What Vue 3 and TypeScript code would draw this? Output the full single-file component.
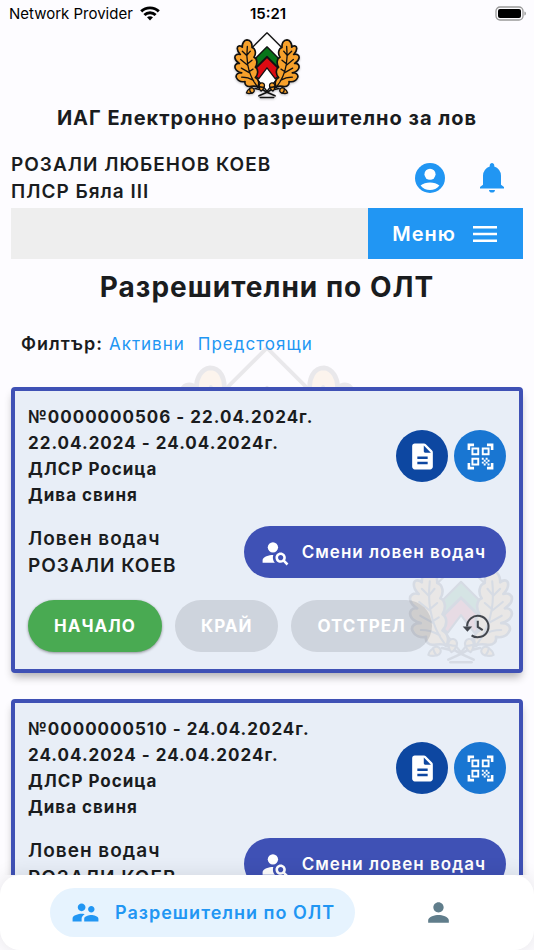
<script setup lang="ts">
import { ref } from 'vue'

interface Permit {
  number: string
  issued: string
  from: string
  to: string
  area: string
  game: string
  leader: string
}

const hunter = 'РОЗАЛИ ЛЮБЕНОВ КОЕВ'
const station = 'ПЛСР Бяла III'

const permits = ref<Permit[]>([
  {
    number: '0000000506',
    issued: '22.04.2024г.',
    from: '22.04.2024',
    to: '24.04.2024г.',
    area: 'ДЛСР Росица',
    game: 'Дива свиня',
    leader: 'РОЗАЛИ КОЕВ',
  },
  {
    number: '0000000510',
    issued: '24.04.2024г.',
    from: '24.04.2024',
    to: '24.04.2024г.',
    area: 'ДЛСР Росица',
    game: 'Дива свиня',
    leader: 'РОЗАЛИ КОЕВ',
  },
])
</script>

<template>
  <div class="app">
    <!-- Shared emblem artwork -->
    <svg class="defs" aria-hidden="true">
      <defs>
        <g id="acorn">
          <path d="M-7 -1 C-7 8 -4 11 0 14 C4 11 7 8 7 -1 Z" fill="#f7a12b" />
          <path d="M-8 0 C-9 -8 -4 -11 0 -11 C4 -11 9 -8 8 0 C4 2 -4 2 -8 0 Z" fill="#f7a12b" />
        </g>
        <g id="oak">
          <path
            fill="#f7a12b"
            stroke-width="5"
            d="M66 34 C57 35 51 45 52 56 C45 49 36 52 37 61 C37 68 41 73 46 78 C36 75 28 80 30 89 C31 97 37 101 43 105 C34 104 27 110 31 120 C34 128 42 131 50 133 C40 132 31 138 34 147 C39 158 50 161 60 159 C58 168 65 175 75 174 C84 173 92 171 98 176 C104 166 102 152 91 147 C100 138 101 123 91 116 C98 106 97 90 87 86 C94 76 92 60 81 57 C82 45 77 34 66 34 Z"
          />
          <path
            fill="none"
            d="M98 176 C82 156 72 132 68 108 C65 90 65 72 67 54 M66 82 L52 68 M66 80 L76 68 M68 110 L47 93 M68 106 L81 95 M74 133 L49 119 M73 129 L84 122 M86 156 C76 150 62 146 50 146"
          />
          <path fill="none" stroke-width="5" d="M97 174 L126 191 L150 202 M90 180 L104 183" />
          <use href="#acorn" transform="translate(77 187) rotate(65)" />
          <use href="#acorn" transform="translate(110 174) rotate(8)" />
        </g>
        <symbol id="emblem" viewBox="24 8 204 206">
          <g stroke="#111" stroke-width="4" stroke-linejoin="round" stroke-linecap="round">
            <path d="M126 13 L174 61 V130 L126 188 L78 130 V61 Z" fill="#fff" />
            <path d="M126 55 L172 101 V130 L126 84 L80 130 V101 Z" fill="#08751a" />
            <path d="M126 86 L172 132 L151 151 L126 118 L101 151 L80 132 Z" fill="#dc0a12" />
            <path d="M106 207 H146" fill="none" stroke-width="5" />
            <use href="#oak" />
            <use href="#oak" transform="matrix(-1 0 0 1 252 0)" />
          </g>
        </symbol>
      </defs>
    </svg>

    <div class="status">
      <span class="carrier">
        Network Provider
        <svg class="wifi" viewBox="0 0 20 15" aria-hidden="true">
          <g fill="none" stroke="#000" stroke-width="2.9">
            <path d="M1.2 5.4 C6 .7 14 .7 18.8 5.4" />
            <path d="M4.4 9 C7.5 6 12.5 6 15.6 9" />
          </g>
          <path d="M7 11.3 C8.7 9.8 11.3 9.8 13 11.3 L10 14.4 Z" />
        </svg>
      </span>
      <time class="clock">15:21</time>
      <svg class="battery" viewBox="0 0 32 16" aria-hidden="true">
        <rect x="1" y="1" width="27" height="13" rx="4" fill="none" stroke="#999" stroke-width="1.3" />
        <rect x="3" y="3" width="23" height="9" rx="2" />
        <path d="M29.5 5.5 C31.2 6 31.2 9 29.5 9.5 Z" fill="#888" />
      </svg>
    </div>

    <header class="header">
      <svg class="logo" role="img" aria-label="ИАГ"><use href="#emblem" /></svg>
      <p class="app-title">ИАГ Електронно разрешително за лов</p>
      <div class="profile">
        <div class="who">
          <p>{{ hunter }}</p>
          <p>{{ station }}</p>
        </div>
        <button class="plain" type="button" aria-label="Профил">
          <svg viewBox="0 0 24 24" class="icon-lg">
            <circle cx="12" cy="12" r="10" fill="currentColor" />
            <circle cx="12" cy="9.5" r="3.7" fill="#fff" />
            <path d="M5.7 17 C7.3 15.7 9.6 15 12 15 S16.7 15.7 18.3 17 C16.7 19 14.5 20 12 20 S7.3 19 5.7 17Z" fill="#fff" />
          </svg>
        </button>
        <button class="plain" type="button" aria-label="Известия">
          <svg viewBox="0 0 24 24" class="icon-lg" fill="currentColor">
            <path d="M4 19v-1l2-1.5V10.5q0-2.3 1.25-3.9Q8.5 5 10.5 4.4v-.9q0-.6.44-1.06Q11.4 2 12 2t1.06.44q.44.44.44 1.06v.9q2 .6 3.25 2.2Q18 8.2 18 10.5v6l2 1.5v1ZM10 20h4q0 .8-.59 1.3Q12.8 21.7 12 21.7t-1.41-.4Q10 20.8 10 20Z" />
          </svg>
        </button>
      </div>
      <div class="menu-bar">
        <button class="menu" type="button">
          Меню
          <svg viewBox="0 0 24 16" class="burger" aria-hidden="true">
            <path d="M0 1.2H24M0 8H24M0 14.8H24" stroke="currentColor" stroke-width="2.4" />
          </svg>
        </button>
      </div>
    </header>

    <main class="content">
      <svg class="page-mark" aria-hidden="true"><use href="#emblem" /></svg>
      <h1>Разрешителни по ОЛТ</h1>
      <nav class="filter">
        <strong>Филтър:</strong>
        <a href="#active">Активни</a>
        <a href="#upcoming">Предстоящи</a>
      </nav>

      <section class="cards">
        <article v-for="p in permits" :key="p.number" class="card">
          <svg class="card-mark" aria-hidden="true"><use href="#emblem" /></svg>
          <div class="row">
            <div class="info">
              <p>№{{ p.number }} - {{ p.issued }}</p>
              <p>{{ p.from }} - {{ p.to }}</p>
              <p>{{ p.area }}</p>
              <p>{{ p.game }}</p>
            </div>
            <div class="round-group">
              <button class="round doc" type="button" aria-label="Документ">
                <svg viewBox="0 0 24 24" class="icon" fill="currentColor">
                  <path fill-rule="evenodd" d="M6 2c-1.1 0-2 .9-2 2v16c0 1.1.9 2 2 2h12c1.1 0 2-.9 2-2V8.83c0-.53-.21-1.04-.59-1.41l-4.83-4.83C14.21 2.21 13.7 2 13.17 2H6zm7 6V3.5L18.5 9H14c-.55 0-1-.45-1-1zM8 12h8v2H8zM8 16h8v2H8z" />
                </svg>
              </button>
              <button class="round qr" type="button" aria-label="QR код">
                <svg viewBox="0 0 24 24" class="icon" fill="currentColor">
                  <path d="M9.5 6.5v3h-3v-3h3M11 5H5v6h6V5zm-1.5 9.5v3h-3v-3h3M11 13H5v6h6v-6zm6.5-6.5v3h-3v-3h3M19 5h-6v6h6V5zm-6 8h1.5v1.5H13V13zm1.5 1.5H16V16h-1.5v-1.5zM16 13h1.5v1.5H16V13zm-3 3h1.5v1.5H13V16zm1.5 1.5H16V19h-1.5v-1.5zM16 16h1.5v1.5H16V16zm1.5-1.5H19V16h-1.5v-1.5zm0 3H19V19h-1.5v-1.5zM22 7h-2V4h-3V2h5v5zm0 15v-5h-2v3h-3v2h5zM2 22h5v-2H4v-3H2v5zM2 2v5h2V4h3V2H2z" />
                </svg>
              </button>
            </div>
          </div>
          <div class="row leader-row">
            <div class="leader">
              <p>Ловен водач</p>
              <p>{{ p.leader }}</p>
            </div>
            <button class="pill change" type="button">
              <svg viewBox="0 0 24 24" class="icon" fill="currentColor" aria-hidden="true">
                <circle cx="10" cy="8" r="4" />
                <path d="M10.35 14.01C7.62 13.91 2 15.27 2 18v2h9.54c-2.47-2.76-1.23-5.89-1.19-5.99zM19.43 18.02c.36-.59.57-1.28.57-2.02 0-2.21-1.79-4-4-4s-4 1.79-4 4 1.79 4 4 4c.74 0 1.43-.22 2.02-.57L20.59 22 22 20.59l-2.57-2.57zM16 18c-1.1 0-2-.9-2-2s.9-2 2-2 2 .9 2 2-.9 2-2 2z" />
              </svg>
              Смени ловен водач
            </button>
          </div>
          <div class="row actions">
            <button class="pill start" type="button">НАЧАЛО</button>
            <button class="pill" type="button" disabled>КРАЙ</button>
            <button class="pill" type="button" disabled>ОТСТРЕЛ</button>
            <button class="history" type="button" aria-label="История">
              <svg viewBox="0 0 24 24" class="icon" fill="none" stroke="currentColor" stroke-width="1.6">
                <path d="M4.7 12A8.3 8.3 0 1 1 8.2 18.8M13 7.5V12.3L16.8 14.8" />
                <path d="M1.3 12H8.7L5 16Z" fill="currentColor" stroke="none" />
              </svg>
            </button>
          </div>
        </article>
      </section>
    </main>

    <nav class="tabs">
      <a class="tab active" href="#permits">
        <svg viewBox="0 0 24 24" class="icon" fill="currentColor" aria-hidden="true">
          <path d="M16.5 12c1.38 0 2.49-1.12 2.49-2.5S17.88 7 16.5 7C15.12 7 14 8.12 14 9.5s1.12 2.5 2.5 2.5zM9 11c1.66 0 2.99-1.34 2.99-3S10.66 5 9 5C7.34 5 6 6.34 6 8s1.34 3 3 3zm7.5 3c-1.83 0-5.5.92-5.5 2.75V19h11v-2.25c0-1.83-3.67-2.75-5.5-2.75zM9 13c-2.33 0-7 1.17-7 3.5V19h7v-2.25c0-.85.33-2.34 2.37-3.47C10.5 13.1 9.66 13 9 13z" />
        </svg>
        Разрешителни по ОЛТ
      </a>
      <a class="tab" href="#profile" aria-label="Профил">
        <svg viewBox="0 0 24 24" class="icon" fill="currentColor">
          <path d="M12 12c2.21 0 4-1.79 4-4s-1.79-4-4-4-4 1.79-4 4 1.79 4 4 4zm0 2c-2.67 0-8 1.34-8 4v2h16v-2c0-2.66-5.33-4-8-4z" />
        </svg>
      </a>
    </nav>
  </div>
</template>

<style>
body {
  background: #fdfcff;
}
</style>

<style scoped>
.app {
  display: flex;
  flex-direction: column;
  height: 100vh;
  font-family: Inter, "Liberation Sans", sans-serif;
  font-size: 18px;
  font-weight: 600;
  letter-spacing: 1px;
  color: #1a1c1e;
  background: #fdfcff;
}
p,
h1 {
  margin: 0;
}
button {
  border: 0;
  padding: 0;
  background: none;
  font: inherit;
  letter-spacing: inherit;
  color: inherit;
  cursor: pointer;
}
a {
  text-decoration: none;
}
svg {
  display: block;
  flex-shrink: 0;
}
.defs {
  position: absolute;
  width: 0;
  height: 0;
}
.icon {
  width: 31px;
  height: 31px;
}
.icon-lg {
  width: 36px;
  height: 36px;
}

.status {
  display: grid;
  grid-template-columns: 1fr auto 1fr;
  align-items: center;
  height: 27px;
  flex-shrink: 0;
  padding: 0 7px 0 9px;
  font-size: 15px;
  letter-spacing: normal;
  color: #000;
}
.carrier {
  display: flex;
  align-items: center;
  gap: 7px;
  font-weight: 400;
}
.wifi {
  width: 20px;
  height: 15px;
}
.battery {
  width: 32px;
  height: 16px;
  justify-self: end;
}

.header {
  flex-shrink: 0;
  padding: 4px 11px 0;
}
.logo {
  width: 68px;
  height: 69px;
  margin: 0 auto;
  filter: drop-shadow(0 1px 1px rgba(0, 0, 0, 0.25));
}
.app-title {
  margin-top: 5px;
  line-height: 27px;
  font-size: 20px;
  font-weight: 700;
  text-align: center;
}
.profile {
  display: flex;
  align-items: center;
  gap: 26px;
  margin: 19px 13px 3px 0;
  line-height: 27px;
  font-size: 19px;
}
.who {
  flex: 1;
}
.plain {
  color: #2196f3;
}
.menu-bar {
  display: flex;
  justify-content: flex-end;
  background: #eee;
}
.menu {
  display: flex;
  align-items: center;
  gap: 17px;
  height: 51px;
  padding: 0 26px 0 24px;
  font-size: 20px;
  color: #fff;
  background: #2196f3;
}
.burger {
  width: 24px;
  height: 16px;
}

.content {
  position: relative;
  flex: 1;
  min-height: 0;
  overflow-y: auto;
  scrollbar-width: none;
  padding: 8px 11px 0;
}
.page-mark {
  position: absolute;
  top: 84px;
  left: 50%;
  width: 194px;
  height: 196px;
  transform: translateX(-50%);
  opacity: 0.08;
}
h1 {
  line-height: 40px;
  font-size: 28px;
  font-weight: 700;
  text-align: center;
}
.filter {
  position: relative;
  display: flex;
  margin: 23px 10px 0;
  line-height: 28px;
}
.filter strong {
  font-weight: 600;
}
.filter a {
  margin-left: 6px;
  font-size: 17px;
  font-weight: 400;
  color: #2196f3;
}
.filter a + a {
  margin-left: 13px;
}
.cards {
  display: flex;
  flex-direction: column;
  gap: 26px;
  margin-top: 29px;
  padding-bottom: 26px;
}
.card {
  position: relative;
  padding: 13px 13px 17px;
  border: 4px solid #3f51b5;
  border-radius: 4px;
  background: #e8eef7;
  box-shadow: 0 6px 8px -2px rgba(0, 0, 0, 0.3);
}
.card-mark {
  position: absolute;
  right: 4px;
  bottom: 3px;
  width: 108px;
  height: 109px;
  opacity: 0.08;
}
.row {
  position: relative;
  display: flex;
  align-items: center;
  justify-content: space-between;
}
.info {
  line-height: 26px;
  font-size: 17px;
  font-weight: 700;
}
.round-group {
  display: flex;
  gap: 6px;
}
.round {
  display: grid;
  place-items: center;
  width: 52px;
  height: 52px;
  border-radius: 50%;
  color: #fff;
}
.doc {
  background: #0d47a1;
}
.qr {
  background: #1976d2;
}
.leader-row {
  margin-top: 17px;
}
.leader {
  line-height: 27px;
  font-size: 19px;
}
.pill {
  display: flex;
  align-items: center;
  height: 52px;
  padding: 0 26px;
  border-radius: 26px;
  font-size: 17px;
  font-weight: 700;
  color: #fff;
  white-space: nowrap;
}
.pill:disabled {
  background: rgba(26, 28, 30, 0.12);
  cursor: default;
}
.change {
  gap: 11px;
  padding: 0 20px 0 16px;
  font-weight: 600;
  background: #3f51b5;
}
.actions {
  justify-content: flex-start;
  gap: 13px;
  margin-top: 21px;
}
.start {
  background: #49aa52;
  box-shadow: 0 1px 3px rgba(0, 0, 0, 0.4);
}
.history {
  display: grid;
  place-items: center;
  width: 60px;
  height: 52px;
  margin-left: auto;
  color: #43474e;
}

.tabs {
  position: relative;
  display: flex;
  align-items: center;
  justify-content: space-between;
  flex-shrink: 0;
  height: 75px;
  padding: 0 60px 0 50px;
  border-radius: 20px;
  background: #fff;
  box-shadow: 0 0 20px rgba(0, 0, 0, 0.1);
}
.tab {
  display: flex;
  align-items: center;
  gap: 14px;
  height: 49px;
  padding: 0 20px;
  border-radius: 25px;
  color: #607d8b;
}
.tab.active {
  color: #2196f3;
  background: #e6f3fe;
}
</style>
